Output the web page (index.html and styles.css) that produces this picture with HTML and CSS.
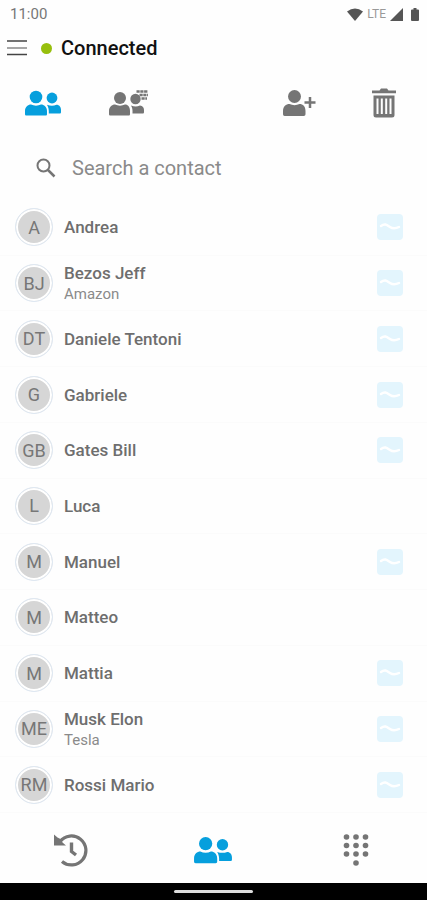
FILE: index.html
```html
<!DOCTYPE html>
<html lang="en">
<head>
  <meta charset="utf-8">
  <meta name="viewport" content="width=device-width, initial-scale=1">
  <title>Contacts</title>
  <link rel="stylesheet" href="styles.css">
</head>
<body>
  <!-- shared icons -->
  <svg class="sprite" aria-hidden="true">
    <symbol id="people" viewBox="0 0 38 26">
      <circle cx="12" cy="7" r="6.3"/>
      <path d="M1 24v-3c0-4 3-6.500 6-6.500 3 1.500 7 1.500 10 0 3 0 6 2.500 6 6.500v3c0 1-.5 1.500-1.500 1.500h-19C1.500 25.500 1 25 1 24z"/>
      <circle cx="28" cy="8" r="5.400"/>
      <path d="M23 14.800c3.500 1.200 6.500 1.200 9.500 0 2.700 0 4.500 2.200 4.500 5v2.200c0 1-.5 1.500-1.500 1.500H24.800c.2-3.500-.3-6.200-1.800-8.700z"/>
    </symbol>
    <symbol id="chat" viewBox="0 0 28 28">
      <rect x="1" y="1" width="26" height="26" rx="4" fill="#e3f5fd"/>
      <path d="M5 13c4-3 6-1 9 1s5 2 9 0" fill="none" stroke="#fff" stroke-width="2.500" stroke-linecap="round"/>
    </symbol>
  </svg>

  <div class="app">
    <div class="status-bar">
      <span class="clock">11:00</span>
      <div class="status-icons">
        <svg width="16" height="13" viewBox="0 0 16 13"><path d="M0 3.500Q8-2.500 16 3.500L8 13z"/></svg>
        <span class="network">LTE</span>
        <svg width="13" height="13" viewBox="0 0 13 13"><path d="M13 0v13H0z"/></svg>
        <svg class="battery" width="8" height="13" viewBox="0 0 8 13"><path d="M2.500 0h3v1.500H7q1 0 1 1V12q0 1-1 1H1q-1 0-1-1V2.500q0-1 1-1h1.500z"/></svg>
      </div>
    </div>

    <header class="header">
      <button class="icon-button" aria-label="Menu">
        <svg width="20" height="16" viewBox="0 0 20 16">
          <path d="M0 1h20M0 14.500h20" stroke="#444" stroke-width="1.500"/>
          <path d="M0 8h20" stroke="#888" stroke-width="1.500"/>
        </svg>
      </button>
      <span class="status-dot"></span>
      <h1 class="title">Connected</h1>
    </header>

    <div class="toolbar">
      <button class="icon-button active" aria-label="Contacts">
        <svg width="38" height="26"><use href="#people"/></svg>
      </button>
      <button class="icon-button" aria-label="Phone book">
        <svg width="40" height="26" viewBox="0 0 40 26">
          <circle cx="12" cy="8" r="6"/>
          <path d="M1 24v-3c0-4 3-6.500 6-6.500 3 1.500 7 1.500 10 0 3 0 5 2.500 5 6.500v3c0 1-.5 1.500-1.500 1.500h-18C1.500 25.500 1 25 1 24z"/>
          <circle cx="27.500" cy="9" r="5.200"/>
          <path d="M23 15.500c3.500 1.200 6 1.200 9 0 2.700 0 4 2.200 4 4.500v2c0 1-.5 1.500-1.500 1.500H24.500c.2-3.500-.1-5.800-1.500-8z"/>
          <path d="M28.500 1.500H40M31.500 5H40M33.500 8.500H39" fill="none" stroke="currentColor" stroke-width="2.400" stroke-dasharray="3.200 .6"/>
        </svg>
      </button>
      <span></span>
      <button class="icon-button" aria-label="Add contact">
        <svg width="34" height="28" viewBox="0 0 34 28">
          <circle cx="12.500" cy="7.500" r="6.500"/>
          <path d="M1 25v-3c0-4.500 3-7 6.500-7 3 1.500 7 1.500 10 0 3.500 0 6 2.500 6 7v3c0 1.200-.6 2-1.800 2h-19C1.600 27 1 26.200 1 25z"/>
          <path d="M28 8v11M22.500 13.500h11" fill="none" stroke="currentColor" stroke-width="2.500"/>
        </svg>
      </button>
      <button class="icon-button" aria-label="Delete">
        <svg width="26" height="30" viewBox="0 0 26 30">
          <path d="M1 2.500h7.500L10 .5h6l1.500 2H25v2.800H1z"/>
          <path fill-rule="evenodd" d="M2.500 7.500h21V27q0 2.500-2.500 2.500H5q-2.500 0-2.500-2.500zM5.500 10.500v15.500h2V10.500zM9.800 10.500v15.500h2V10.500zM14.200 10.500v15.500h2V10.500zM18.500 10.500v15.500h2V10.500z"/>
        </svg>
      </button>
    </div>

    <div class="search">
      <label for="search" aria-label="Search a contact">
        <svg width="20" height="20" viewBox="0 0 20 20"><circle cx="7.500" cy="7.500" r="6" fill="none" stroke="currentColor" stroke-width="2"/><path d="M12 12l6.500 6.500" stroke="currentColor" stroke-width="2.500"/></svg>
      </label>
      <input type="text" id="search" placeholder="Search a contact">
    </div>

    <ul class="contacts">
      <li class="contact">
        <span class="avatar">A</span>
        <div class="info"><span class="name">Andrea</span></div>
        <button class="icon-button" aria-label="Chat"><svg width="28" height="28"><use href="#chat"/></svg></button>
      </li>
      <li class="contact">
        <span class="avatar">BJ</span>
        <div class="info"><span class="name">Bezos Jeff</span><span class="company">Amazon</span></div>
        <button class="icon-button" aria-label="Chat"><svg width="28" height="28"><use href="#chat"/></svg></button>
      </li>
      <li class="contact">
        <span class="avatar">DT</span>
        <div class="info"><span class="name">Daniele Tentoni</span></div>
        <button class="icon-button" aria-label="Chat"><svg width="28" height="28"><use href="#chat"/></svg></button>
      </li>
      <li class="contact">
        <span class="avatar">G</span>
        <div class="info"><span class="name">Gabriele</span></div>
        <button class="icon-button" aria-label="Chat"><svg width="28" height="28"><use href="#chat"/></svg></button>
      </li>
      <li class="contact">
        <span class="avatar">GB</span>
        <div class="info"><span class="name">Gates Bill</span></div>
        <button class="icon-button" aria-label="Chat"><svg width="28" height="28"><use href="#chat"/></svg></button>
      </li>
      <li class="contact">
        <span class="avatar">L</span>
        <div class="info"><span class="name">Luca</span></div>
      </li>
      <li class="contact">
        <span class="avatar">M</span>
        <div class="info"><span class="name">Manuel</span></div>
        <button class="icon-button" aria-label="Chat"><svg width="28" height="28"><use href="#chat"/></svg></button>
      </li>
      <li class="contact">
        <span class="avatar">M</span>
        <div class="info"><span class="name">Matteo</span></div>
      </li>
      <li class="contact">
        <span class="avatar">M</span>
        <div class="info"><span class="name">Mattia</span></div>
        <button class="icon-button" aria-label="Chat"><svg width="28" height="28"><use href="#chat"/></svg></button>
      </li>
      <li class="contact">
        <span class="avatar">ME</span>
        <div class="info"><span class="name">Musk Elon</span><span class="company">Tesla</span></div>
        <button class="icon-button" aria-label="Chat"><svg width="28" height="28"><use href="#chat"/></svg></button>
      </li>
      <li class="contact">
        <span class="avatar">RM</span>
        <div class="info"><span class="name">Rossi Mario</span></div>
        <button class="icon-button" aria-label="Chat"><svg width="28" height="28"><use href="#chat"/></svg></button>
      </li>
    </ul>

    <nav class="bottom-nav">
      <button class="icon-button" aria-label="History">
        <svg width="34" height="34" viewBox="0 0 34 34">
          <path d="M6 8.500A14.500 14.500 0 1 1 8 28.500" fill="none" stroke="currentColor" stroke-width="3.200"/>
          <path d="M0 1.500L3.500 4.500 7.500 6.500 8.500 9.500 12 12.500H0z"/>
          <path d="M17.500 9.500v9l4.500 3.500" fill="none" stroke="currentColor" stroke-width="3.400"/>
        </svg>
      </button>
      <button class="icon-button active" aria-label="Contacts">
        <svg width="40" height="28"><use href="#people"/></svg>
      </button>
      <button class="icon-button" aria-label="Dialpad">
        <svg width="26" height="34" viewBox="0 0 26 34">
          <circle cx="3.500" cy="4" r="2.800"/><circle cx="13" cy="4" r="2.800"/><circle cx="22.500" cy="4" r="2.800"/>
          <circle cx="3.500" cy="12.500" r="2.800"/><circle cx="13" cy="12.500" r="2.800"/><circle cx="22.500" cy="12.500" r="2.800"/>
          <circle cx="3.500" cy="21" r="2.800"/><circle cx="13" cy="21" r="2.800"/><circle cx="22.500" cy="21" r="2.800"/>
          <circle cx="13" cy="30" r="2.800"/>
        </svg>
      </button>
    </nav>

    <div class="system-bar"><span class="handle"></span></div>
  </div>
</body>
</html>
```

FILE: styles.css
```css
:root {
  --primary-color: #069fdd;
  --icon-color: #757575;
  --text-primary: #6e6e6e;
  --text-secondary: #8a8a8a;
  --online: #97bf0d;
}

* {
  box-sizing: border-box;
}

body {
  margin: 0;
  font-family: Roboto, sans-serif;
  background: #fefefe;
  color: var(--text-primary);
}

svg {
  display: block;
  fill: currentColor;
}

.sprite {
  position: absolute;
  width: 0;
  height: 0;
}

.app {
  display: flex;
  flex-direction: column;
  min-height: 100vh;
}

.icon-button {
  display: flex;
  align-items: center;
  justify-content: center;
  padding: 0;
  border: none;
  background: none;
  color: var(--icon-color);
  cursor: pointer;
}

.icon-button.active {
  color: var(--primary-color);
}

.status-bar {
  display: flex;
  align-items: center;
  justify-content: space-between;
  height: 28px;
  padding: 0 8px 0 10px;
}

.clock {
  font-size: 15px;
  color: #777;
}

.status-icons {
  display: flex;
  align-items: center;
  gap: 4px;
  color: #555;
}

.network {
  font-size: 12px;
  color: #999;
}

.battery {
  margin-left: 4px;
}

.header {
  display: flex;
  align-items: center;
  height: 40px;
  padding: 0 7px;
}

.status-dot {
  width: 11px;
  height: 11px;
  margin: 0 9px 0 14px;
  border-radius: 50%;
  background: var(--online);
}

.title {
  margin: 0;
  font-size: 20px;
  font-weight: 500;
  color: #111;
}

.toolbar {
  display: grid;
  grid-template-columns: repeat(5, 1fr);
  height: 68px;
  padding-top: 1px;
}

.search {
  display: flex;
  align-items: center;
  gap: 16px;
  height: 64px;
  padding: 0 36px;
  color: var(--icon-color);
}

.search input {
  flex: 1;
  min-width: 0;
  padding: 0;
  border: none;
  outline: none;
  background: none;
  font-family: inherit;
  font-size: 20px;
  color: var(--text-primary);
}

.search input::placeholder {
  color: var(--text-secondary);
}

.contacts {
  flex: 1;
  display: grid;
  grid-auto-rows: 1fr;
  margin: 0;
  padding: 0;
  list-style: none;
}

.contact {
  display: flex;
  align-items: center;
  min-height: 52px;
  padding: 0 23px 0 15px;
  border-bottom: 1px solid #fbfbfb;
}

.avatar {
  display: flex;
  align-items: center;
  justify-content: center;
  width: 38px;
  height: 38px;
  border: 1px solid #dfe8f2;
  border-radius: 50%;
  background: #d6d6d6;
  box-shadow: inset 0 0 0 2px #fff;
  font-size: 18px;
  color: #777;
}

.info {
  flex: 1;
  display: flex;
  flex-direction: column;
  margin-left: 11px;
}

.name {
  font-size: 17px;
  font-weight: 500;
  line-height: 22px;
}

.company {
  font-size: 15px;
  line-height: 20px;
  color: var(--text-secondary);
}

.bottom-nav {
  display: grid;
  grid-template-columns: repeat(3, 1fr);
  height: 70px;
  padding-top: 4px;
}

.system-bar {
  display: flex;
  align-items: center;
  justify-content: center;
  height: 17px;
  background: #000;
}

.handle {
  width: 79px;
  height: 3px;
  border-radius: 2px;
  background: #ddd;
}
```
